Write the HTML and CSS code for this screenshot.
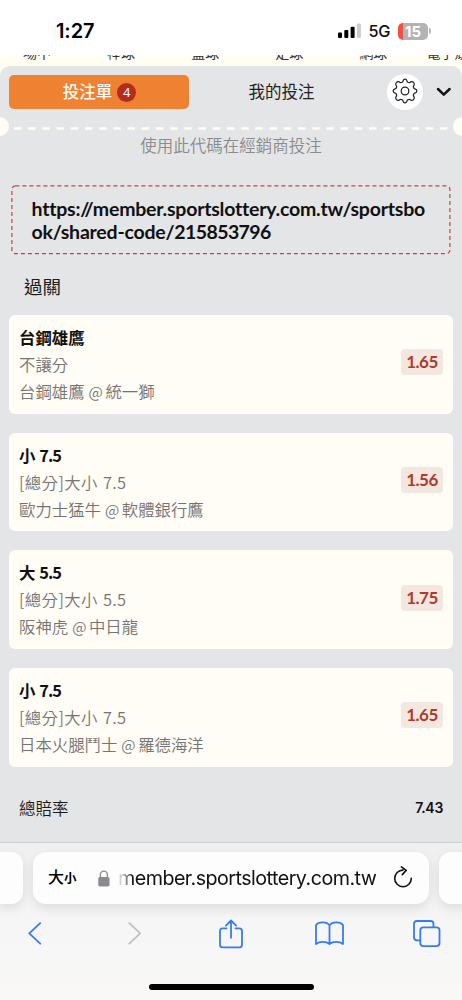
FILE: index.html
```html
<!DOCTYPE html>
<html lang="zh-Hant">
<head>
<meta charset="utf-8">
<meta name="viewport" content="width=device-width">
<title>投注單</title>
<link rel="stylesheet" href="styles.css">
</head>
<body>
<div class="phone">
  <header class="status">
    <span class="clock">1:27</span>
    <div class="status-right">
      <svg class="signal" width="23" height="16" viewBox="0 0 23 16"><rect x="0" y="9.6" width="4" height="5.4" rx="1"/><rect x="6.3" y="7" width="4" height="8" rx="1"/><rect x="12.6" y="3.7" width="4" height="11.3" rx="1"/><rect class="dim" x="18.9" y="0.4" width="4" height="14.6" rx="1"/></svg>
      <span class="network">5G</span>
      <div class="battery"><span>15</span></div>
      <i class="battery-tip"></i>
    </div>
  </header>
  <nav class="sports"><span>場中</span><span>棒球</span><span>籃球</span><span>足球</span><span>網球</span><span>電子競技</span></nav>
  <main class="slip">
    <div class="tabs">
      <div class="tab active">投注單<b>4</b></div>
      <div class="tab">我的投注</div>
      <div class="gear">
        <svg width="26" height="26" viewBox="-13 -13 26 26"><path d="M-2.8-8.8Q-2-9.3-1.8-10.4Q-1.5-11.8 0-11.8Q1.5-11.8 1.8-10.4Q2-9.3 2.8-8.8Q4-8.2 4.8-8.5L6.3-9.3Q7.5-9.7 8.5-8.6Q9.6-7.5 9.2-6.3L8.4-4.8Q8.2-4 8.8-2.8Q9.3-2 10.4-1.8Q11.8-1.5 11.8 0Q11.8 1.5 10.4 1.8Q9.3 2 8.8 2.8Q8.2 4 8.4 4.8L9.2 6.3Q9.6 7.5 8.5 8.6Q7.5 9.7 6.3 9.3L4.8 8.5Q4 8.2 2.8 8.8Q2 9.3 1.8 10.4Q1.5 11.8 0 11.8Q-1.5 11.8-1.8 10.4Q-2 9.3-2.8 8.8Q-4 8.2-4.8 8.5L-6.3 9.3Q-7.5 9.7-8.5 8.6Q-9.6 7.5-9.2 6.3L-8.4 4.8Q-8.2 4-8.8 2.8Q-9.3 2-10.4 1.8Q-11.8 1.5-11.8 0Q-11.8-1.5-10.4-1.8Q-9.3-2-8.8-2.8Q-8.2-4-8.4-4.8L-9.2-6.3Q-9.6-7.5-8.5-8.6Q-7.5-9.7-6.3-9.3L-4.8-8.5Q-4-8.2-2.8-8.8Z"/><circle r="3.8"/></svg>
      </div>
      <svg class="chevron" width="16" height="10" viewBox="0 0 16 10"><path d="M2 2L7.8 7.6L13.6 2"/></svg>
    </div>
    <div class="tear"><i class="notch"></i><svg class="perforation" width="434" height="3" viewBox="0 0 434 3"><path d="M0 1.5H434" stroke-dasharray="7.4 6.8"/></svg><i class="notch"></i></div>
    <p class="hint">使用此代碼在經銷商投注</p>
    <div class="code">
      <svg class="outline" width="440" height="70" viewBox="0 0 440 70"><rect x="0.9" y="0.9" width="438" height="67.8" rx="3.5"/></svg>
      <span>https://member.sportslottery.com.tw/sportsbo<br>ok/shared-code/<span class="code-number">215853796</span></span>
    </div>
    <h2 class="kind">過關</h2>
    <section class="bets">
      <article class="bet"><div><h3>台鋼雄鷹</h3><p>不讓分</p><p>台鋼雄鷹<span class="at">@</span>統一獅</p></div><span class="odds">1.65</span></article>
      <article class="bet"><div><h3>小 <span class="line">7.5</span></h3><p class="market">[總分]大小 <span class="num">7.5</span></p><p>歐力士猛牛<span class="at">@</span>軟體銀行鷹</p></div><span class="odds">1.56</span></article>
      <article class="bet"><div><h3>大 <span class="line">5.5</span></h3><p class="market">[總分]大小 <span class="num">5.5</span></p><p>阪神虎<span class="at">@</span>中日龍</p></div><span class="odds">1.75</span></article>
      <article class="bet"><div><h3>小 <span class="line">7.5</span></h3><p class="market">[總分]大小 <span class="num">7.5</span></p><p>日本火腿鬥士<span class="at">@</span>羅德海洋</p></div><span class="odds">1.65</span></article>
    </section>
    <div class="total"><span>總賠率</span><b>7.43</b></div>
  </main>
  <footer class="browser">
    <div class="addresses">
      <div class="side left"></div>
      <div class="address">
        <span class="aa">大<small>小</small></span>
        <svg class="lock" width="12" height="17" viewBox="0 0 12 17"><rect x="0.3" y="7" width="11.2" height="9.4" rx="1.6"/><path d="M2.4 7.5V4.6A3.5 3.5 0 0 1 9.4 4.6V7.5"/></svg>
        <span class="host">member.sportslottery.com.tw</span>
        <svg class="reload" width="20" height="24" viewBox="0 0 20 24"><path d="M10 4.1A8.3 8.3 0 1 0 18.3 12.4M8.4 .9L13.2 4.4L9.3 8.6"/></svg>
      </div>
      <div class="side right"></div>
    </div>
    <div class="tools">
      <svg width="14" height="23" viewBox="0 0 14 23"><path d="M12.2 1.2L1.3 11.4L12.2 21.7"/></svg>
      <svg class="off" width="14" height="23" viewBox="0 0 14 23"><path d="M1.3 1.2L12.2 11.4L1.3 21.7"/></svg>
      <svg width="24" height="30" viewBox="0 0 24 30"><path d="M7.5 9.4H3.6Q1 9.4 1 12V25.7Q1 28.3 3.6 28.3H20.4Q23 28.3 23 25.7V12Q23 9.4 20.4 9.4H16.5M12 18.8V1.6M6.9 6.6L12 1.5L17.1 6.6"/></svg>
      <svg width="29" height="25" viewBox="0 0 29 25"><path d="M14.5 4.2C12 .5 3.5.2 1 4.2V23C4.5 20.2 11.3 20.2 14.5 23C17.7 20.2 24.5 20.2 28 23V4.2C25.5.2 17 .5 14.5 4.2V23"/></svg>
      <svg width="28" height="28" viewBox="0 0 28 28"><path d="M7 20.3H4Q1 20.3 1 17.3V4Q1 1 4 1H17.5Q20.5 1 20.5 4V7"/><rect x="7.3" y="7.3" width="19.2" height="18.8" rx="3"/></svg>
    </div>
    <div class="home"></div>
  </footer>
</div>
</body>
</html>
```

FILE: styles.css
```css
* { box-sizing: border-box; }
body { margin: 0; background: #fff; font-family: Lato, "Noto Sans CJK TC", sans-serif; color: #1c1c1c; }
h2, h3, p { margin: 0; font-weight: 400; }
svg { display: block; flex: none; fill: none; }
.phone { width: 462px; height: 1000px; overflow: hidden; display: flex; flex-direction: column; background: #fffdf4; }

.status { height: 55px; flex: none; background: #fff; display: flex; justify-content: space-between; padding: 19px 31px 0 56px; }
.clock { font: 600 20px/24px Inter, sans-serif; letter-spacing: -.1px; color: #000; }
.status-right { display: flex; align-items: center; height: 24px; }
.signal { fill: #000; margin-right: 7.5px; }
.signal .dim { fill: #ccc; }
.network { font: 500 16.3px/24px Inter, sans-serif; letter-spacing: -.4px; color: #111; width: 29.5px; }
.battery { width: 30px; height: 17px; border-radius: 5px; background: linear-gradient(90deg, #ef5244 5px, #b3b3b3 5px); display: flex; justify-content: center; }
.battery span { font: 700 15px/17px Inter, sans-serif; color: #fff; }
.battery-tip { width: 2px; height: 6px; margin-left: 1px; border-radius: 0 2px 2px 0; background: #b9b9b9; }

.sports { height: 11px; flex: none; overflow: hidden; display: flex; align-items: flex-end; padding: 0 0 3px 23px; font-size: 14px; line-height: 20px; color: #333; white-space: nowrap; }
.sports span { flex: none; width: 84.1px; }
.sports span:nth-child(5) { width: 67px; }

.slip { height: 777px; flex: none; border-radius: 10px 10px 0 0; background: #e4e5e7; overflow: hidden; border-bottom: 1px solid #cfcfd1; }
.tabs { height: 52px; display: flex; align-items: center; padding: 0 11px 0 9px; }
.tab { flex: none; width: 180px; height: 34px; display: flex; align-items: center; justify-content: center; font-size: 16.5px; line-height: 24px; color: #222; }
.tab:nth-child(2) { width: 185px; }
.tab.active { border-radius: 5px; background: #ef8133; color: #fffaf0; font-weight: 500; gap: 5px; padding-left: 1px; }
.tab b { width: 19px; height: 19px; border-radius: 50%; background: #b42b20; font: 400 13px/19px "Noto Sans", sans-serif; text-align: center; }
.gear { flex: none; width: 36px; height: 36px; margin-left: 13px; border-radius: 50%; background: #fff; display: flex; align-items: center; justify-content: center; margin-top: -1px; }
.gear svg { stroke: #222; stroke-width: 1.25; margin-top: -1px; }
.chevron { margin-left: 13px; stroke: #111; stroke-width: 2.5; stroke-linecap: round; stroke-linejoin: round; }
.tear { height: 19px; display: flex; align-items: center; justify-content: space-between; margin: -1px -10px 1px; }
.notch { width: 19px; height: 19px; border-radius: 50%; background: #fffdf4; flex: none; }
.perforation { stroke: #fffdf4; stroke-width: 2.6; margin: 3px 0 0; }
.hint { height: 48px; text-align: center; font-size: 16.5px; font-weight: 350; line-height: 18px; color: #8a8b8c; }
.code { position: relative; width: 440px; height: 70px; margin-left: 11px; padding: 12px 0 0 20.5px; font-weight: 700; font-size: 19.5px; line-height: 23px; letter-spacing: -.22px; color: #111; white-space: nowrap; }
.code-number { letter-spacing: -.6px; }
.outline { position: absolute; inset: 0; stroke: #c34343; stroke-width: 1.2; stroke-dasharray: 4 3; }
.kind { height: 60px; padding: 18px 0 0 24px; font-size: 18.5px; line-height: 28px; }
.bets { display: grid; gap: 19px; padding: 0 9.5px 0 9px; }
.bet { height: 98.7px; border-radius: 6px; background: #fffdf5; display: flex; justify-content: space-between; align-items: center; padding: 0 9.5px 0 10px; font-family: "Noto Sans CJK TC", sans-serif; }
.bet h3, .bet p { height: 27px; font-size: 16.4px; line-height: 27px; white-space: nowrap; }
.bet h3 { color: #111; font-weight: 700; }
.line { letter-spacing: -.9px; }
.bet p { color: #747474; font-weight: 350; }
.bet .market { letter-spacing: .4px; }
.num { margin-left: 1px; }
.at { margin: 0 2.5px 0 4px; font-size: 15.3px; }
.odds { width: 42px; height: 26px; margin-top: -4px; border-radius: 4px; background: #f4e7df; color: #b03a2c; font: 700 17px/26px Lato, sans-serif; letter-spacing: -.5px; text-align: center; }
.total { height: 44px; margin-top: 19px; padding: 0 19px; display: flex; align-items: center; justify-content: space-between; font-size: 16.5px; font-weight: 350; }
.total b { font: 600 14px/20px Inter, sans-serif; letter-spacing: -.3px; color: #111; }

.browser { flex: 1; background: linear-gradient(#f0f0f0, #f6f6f6 55%, #f9f8f7); }
.addresses { display: flex; gap: 10px; padding-top: 9px; }
.side, .address { height: 52px; flex: none; background: #fdfdfd; box-shadow: 0 4px 12px rgba(0,0,0,.1); }
.side { width: 23px; }
.left { border-radius: 0 12px 12px 0; }
.right { border-radius: 12px 0 0 12px; width: 30px; }
.address { width: 396px; border-radius: 13px; display: flex; align-items: center; padding-left: 15px; }
.aa { width: 50px; font-size: 16px; font-weight: 500; line-height: 24px; color: #000; white-space: nowrap; }
.aa small { font-size: 12.5px; font-weight: 700; }
.lock { fill: #8b8b8f; }
.lock path { fill: none; stroke: #8b8b8f; stroke-width: 1.4; }
.host { width: 274px; margin-left: 8px; font: 400 19.7px/28px Inter, sans-serif; letter-spacing: -.53px; white-space: nowrap; color: transparent; background: linear-gradient(90deg, #eee, #999 7px, #111 15px); background-clip: text; }
.reload { margin-left: 1px; stroke: #111; stroke-width: 1.6; stroke-linecap: round; stroke-linejoin: round; }
.tools { height: 58px; width: 490px; margin-left: -14px; display: grid; grid-template-columns: repeat(5, 98px); place-items: center; padding-top: 1px; }
.tools svg { stroke: #347bf6; stroke-width: 1.8; stroke-linecap: round; stroke-linejoin: round; }
.tools .off { stroke: #bfbfbf; margin-left: 3px; }
.home { width: 165px; height: 6px; border-radius: 3px; background: #000; margin: 22px auto 0; }
```
